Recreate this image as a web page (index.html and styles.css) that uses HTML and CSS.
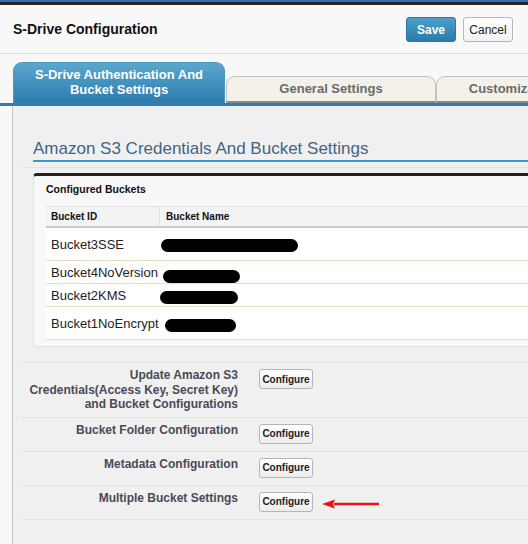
FILE: index.html
```html
<!DOCTYPE html>
<html>
<head>
<meta charset="utf-8">
<title>S-Drive Configuration</title>
<link rel="stylesheet" href="styles.css">
</head>
<body>
<div class="topbar"></div>
<div class="header">
  <h1 class="title">S-Drive Configuration</h1>
  <div class="actions">
    <button class="btn-save">Save</button>
    <button class="btn-cancel">Cancel</button>
  </div>
</div>
<div class="tabs">
  <div class="tab tab-active">S-Drive Authentication And<br>Bucket Settings</div>
  <div class="tab">General Settings</div>
  <div class="tab">Customization Settings</div>
</div>
<div class="panel">
  <h2 class="section-title">Amazon S3 Credentials And Bucket Settings</h2>
  <div class="rule"></div>
  <div class="box">
    <div class="box-title">Configured Buckets</div>
    <table class="grid">
      <thead>
        <tr><th class="c-id">Bucket ID</th><th class="c-name">Bucket Name</th></tr>
      </thead>
      <tbody>
        <tr class="tall"><td class="c-id">Bucket3SSE</td><td class="c-name"><span class="redact" style="width:137px;margin-left:1px"></span></td></tr>
        <tr class="short"><td class="c-id">Bucket4NoVersion</td><td class="c-name"><span class="redact" style="width:77px;margin-left:3px;top:3px"></span></td></tr>
        <tr class="short"><td class="c-id">Bucket2KMS</td><td class="c-name"><span class="redact" style="width:78px;margin-left:0px;top:1px"></span></td></tr>
        <tr class="tall last"><td class="c-id">Bucket1NoEncrypt</td><td class="c-name"><span class="redact" style="width:71px;margin-left:5px;top:1px"></span></td></tr>
      </tbody>
    </table>
  </div>
  <div class="form">
    <div class="form-row">
      <div class="label">Update Amazon S3 Credentials(Access Key, Secret Key) and Bucket Configurations</div>
      <div class="field"><button class="btn">Configure</button></div>
    </div>
    <div class="form-row">
      <div class="label">Bucket Folder Configuration</div>
      <div class="field"><button class="btn">Configure</button></div>
    </div>
    <div class="form-row">
      <div class="label">Metadata Configuration</div>
      <div class="field"><button class="btn">Configure</button></div>
    </div>
    <div class="form-row">
      <div class="label">Multiple Bucket Settings</div>
      <div class="field">
        <button class="btn">Configure</button>
        <svg class="arrow" width="58" height="10" viewBox="0 0 58 10">
          <path d="M12 5 H57" stroke="#e8141b" stroke-width="2.4"/>
          <path d="M0 5 L13 0.5 L11 5 L13 9.5 Z" fill="#e8141b"/>
        </svg>
      </div>
    </div>
  </div>
</div>
</body>
</html>
```
FILE: styles.css
```css
html, body {
  margin: 0;
  padding: 0;
  overflow: hidden;
}
body {
  width: 528px;
  height: 544px;
  background: #f8f8f8;
  font-family: "Liberation Sans", Arial, sans-serif;
  color: #222;
}
.topbar {
  height: 2px;
  background: #3669b8;
  border-bottom: 3px solid #262626;
}
.header {
  height: 48px;
  border-bottom: 1px solid #dddddd;
  display: flex;
  align-items: center;
  justify-content: space-between;
  padding: 0 15px 0 13px;
}
.title {
  margin: 0;
  font-size: 14px;
  font-weight: bold;
  color: #111;
}
.actions {
  display: flex;
  gap: 7px;
  margin-top: 1px;
}
.actions button {
  width: 50px;
  height: 25px;
  border-radius: 3px;
  font-family: "Liberation Sans", Arial, sans-serif;
  font-size: 12px;
  padding: 0;
  cursor: pointer;
}
.btn-save {
  background: linear-gradient(#4d9fcb, #2a7aab);
  border: 1px solid #2c78a6;
  color: #fff;
  font-weight: bold;
}
.btn-cancel {
  background: linear-gradient(#ffffff, #f1f1f1);
  border: 1px solid #b7b7b7;
  color: #222;
}
.tabs {
  display: flex;
  align-items: flex-end;
  padding: 8px 0 0 13px;
  height: 41px;
  border-bottom: 3px solid #2d7db1;
  width: 515px;
  overflow: hidden;
}
.tab {
  box-sizing: border-box;
  width: 210px;
  height: 27px;
  background: #f3f1ea;
  border: 1px solid #c2c2c0;
  border-bottom: 2px solid #8a8a8a;
  border-radius: 9px 9px 0 0;
  font-size: 13px;
  font-weight: bold;
  color: #6a6a6a;
  text-align: center;
  line-height: 24px;
  flex: none;
  white-space: nowrap;
}
.tab-active {
  width: 212px;
  height: 41px;
  background: linear-gradient(#5aa8ce, #2c7bad);
  border: 1px solid #4c97c0;
  border-bottom: none;
  color: #fff;
  line-height: 15px;
  padding-top: 4px;
  margin-right: 1px;
}
.panel {
  margin-left: 12px;
  border-left: 1px solid #c6c6c6;
  background: #f0f0f0;
  width: 540px;
  height: 405px;
  padding-top: 33px;
}
.section-title {
  margin: 0 0 0 20px;
  font-size: 17px;
  font-weight: normal;
  color: #3f6585;
  line-height: 20px;
  height: 21px;
  border-bottom: 2px solid #3a9acb;
}
.rule {
  margin: 5px 0 0 9px;
  border-top: 1px solid #e2e2e2;
}
.box {
  margin: 5px 0 0 20px;
  background: #f8f8f8;
  border-top: 3px solid #222;
  border-left: 1px solid #e2e2e2;
  border-bottom: 1px solid #e2e2e2;
  border-radius: 4px;
  padding: 7px 0 6px 12px;
}
.box-title {
  font-size: 10.5px;
  font-weight: bold;
  color: #111;
  line-height: 13px;
  margin-bottom: 10px;
}
.grid {
  border-collapse: collapse;
  width: 100%;
  background: #fff;
}
.grid th {
  background: #f2f3f3;
  border-top: 1px solid #e0e3e5;
  border-bottom: 2px solid #cccccc;
  font-size: 10px;
  font-weight: bold;
  color: #111;
  text-align: left;
  height: 19px;
  padding: 0 0 0 5px;
}
.grid th.c-id {
  border-right: 1px solid #e0e3e5;
}
.grid th.c-name {
  padding-left: 6px;
}
.grid .c-id {
  width: 108px;
}
.grid td {
  font-size: 13px;
  color: #222;
  padding: 0 0 0 5px;
  border-bottom: 1px solid #e4e0c4;
}
.grid td.c-name {
  padding-left: 0;
}
.grid tr.tall td {
  height: 32px;
}
.grid tr.short td {
  height: 22px;
}
.grid tr.last td {
  border-bottom-color: #dedede;
}
.redact {
  display: inline-block;
  position: relative;
  height: 13px;
  background: #000;
  border-radius: 7px;
  vertical-align: middle;
}
.form {
  margin: 15px 0 0 9px;
  border-top: 1px solid #e2e2e2;
}
.form-row {
  display: flex;
  border-bottom: 1px solid #e2e2e2;
}
.label {
  width: 216px;
  box-sizing: border-box;
  padding: 5px 0 5px 0;
  text-align: right;
  font-size: 12px;
  font-weight: bold;
  color: #4a4a56;
  line-height: 14.5px;
}
.field {
  display: flex;
  align-items: flex-start;
  padding: 6px 0 7px 21px;
  gap: 9px;
}
.btn {
  width: 54px;
  height: 20px;
  padding: 0;
  border: 1px solid #b5b5b5;
  border-radius: 3px;
  background: linear-gradient(#ffffff, #ececec);
  font-family: "Liberation Sans", Arial, sans-serif;
  font-size: 10px;
  font-weight: bold;
  color: #222;
}
.arrow {
  margin-top: 7px;
}
```
